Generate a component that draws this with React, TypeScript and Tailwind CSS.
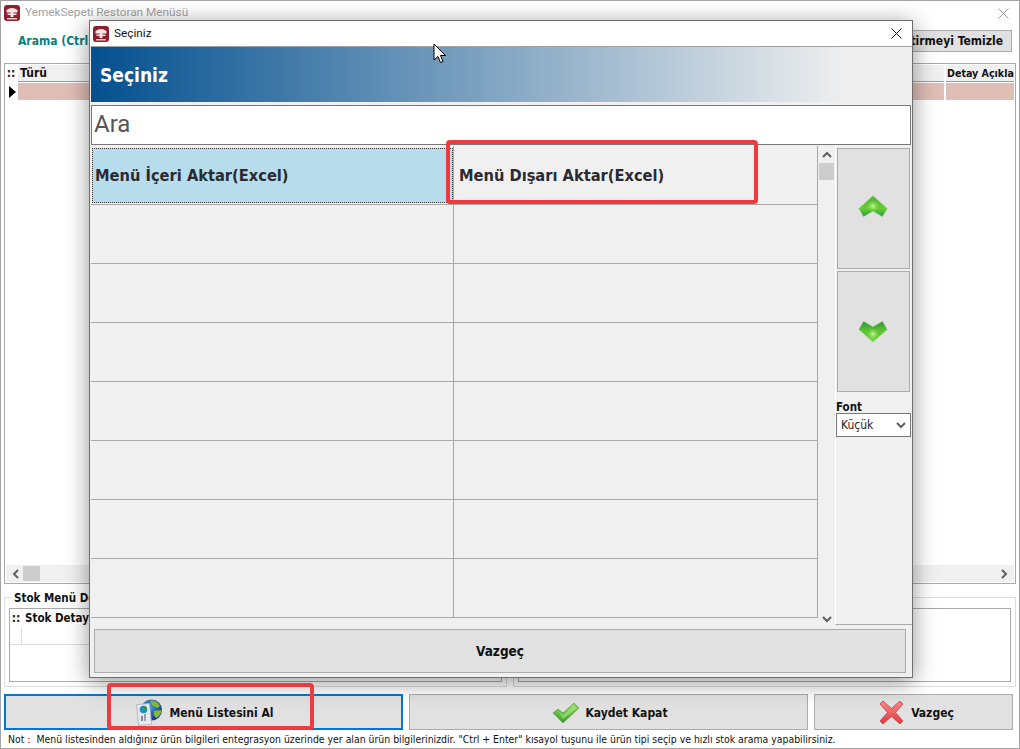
import React from "react";

const UI = '"DejaVu Sans Condensed", "DejaVu Sans", sans-serif';

const AppIcon = () => (
  <svg width="16" height="16" viewBox="0 0 16 16" className="shrink-0">
    <rect x="0" y="0" width="16" height="16" rx="3" fill="#8f1f2d" />
    <path d="M2.5 5 Q8 1 13.5 5 V7.5 H9.5 V8.5 H12.5 V10 H9.5 V12 H6.5 V10 H3.5 V8.5 H6.5 V7.5 H2.5 Z" fill="#f4e4e4" />
    <rect x="3" y="13" width="10" height="1.5" fill="#e9c9c9" />
  </svg>
);

const ArrowUp = () => (
  <svg width="30" height="23" viewBox="0 0 30 23">
    <defs>
      <linearGradient id="gu" x1="0" y1="0" x2="0" y2="1">
        <stop offset="0" stopColor="#4fb030" />
        <stop offset="0.6" stopColor="#66cc36" />
        <stop offset="1" stopColor="#2d9a42" />
      </linearGradient>
      <radialGradient id="gub" cx="0.5" cy="0.5" r="0.5">
        <stop offset="0" stopColor="#c8f590" />
        <stop offset="1" stopColor="#7ad848" stopOpacity="0" />
      </radialGradient>
    </defs>
    <path d="M15 0.5 L29.5 13.5 L24.5 22 L15 16.5 L5.5 22 L0.5 13.5 Z" fill="url(#gu)" stroke="#d7e6d5" strokeWidth="0.6" strokeLinejoin="round" />
    <ellipse cx="15" cy="11" rx="7" ry="6" fill="url(#gub)" />
  </svg>
);

const ArrowDown = () => (
  <svg width="30" height="23" viewBox="0 0 30 23">
    <defs>
      <linearGradient id="gd" x1="0" y1="0" x2="0" y2="1">
        <stop offset="0" stopColor="#2f8f3a" />
        <stop offset="0.45" stopColor="#5cc232" />
        <stop offset="1" stopColor="#7fd844" />
      </linearGradient>
      <radialGradient id="gdb" cx="0.5" cy="0.5" r="0.5">
        <stop offset="0" stopColor="#d2f79a" />
        <stop offset="1" stopColor="#7ad848" stopOpacity="0" />
      </radialGradient>
    </defs>
    <path d="M15 22.5 L29.5 9.5 L24.5 1 L15 6.5 L5.5 1 L0.5 9.5 Z" fill="url(#gd)" stroke="#d7e6d5" strokeWidth="0.6" strokeLinejoin="round" />
    <ellipse cx="15" cy="14" rx="6" ry="6" fill="url(#gdb)" />
  </svg>
);

const Check = () => (
  <svg width="28" height="22" viewBox="0 0 28 22">
    <defs>
      <linearGradient id="gc" x1="0" y1="0" x2="0" y2="1">
        <stop offset="0" stopColor="#8fdd5a" />
        <stop offset="1" stopColor="#3a9c2c" />
      </linearGradient>
    </defs>
    <path d="M1 11 L6 7 L11 11 L22 1 L27 6 L11 21 Z" fill="url(#gc)" stroke="#5aa24a" strokeWidth="0.7" />
    <path d="M6 9 L11 13 L22 3 L25 6 L11 17 Z" fill="#b6ec86" opacity="0.55" />
  </svg>
);

const Cross = () => (
  <svg width="25" height="25" viewBox="0 0 25 25">
    <defs>
      <linearGradient id="gx" x1="0" y1="0" x2="0" y2="1">
        <stop offset="0" stopColor="#f98a8a" />
        <stop offset="1" stopColor="#e33a3a" />
      </linearGradient>
    </defs>
    <path
      d="M4 1 L12.5 8.5 L21 1 L24 4 L16.5 12.5 L24 21 L21 24 L12.5 16.5 L4 24 L1 21 L8.5 12.5 L1 4 Z"
      fill="url(#gx)"
      stroke="#c83c3c"
      strokeWidth="0.8"
      strokeLinejoin="round"
    />
  </svg>
);

const GlobeDoc = () => (
  <svg width="28" height="28" viewBox="0 0 28 28">
    <defs>
      <radialGradient id="gg" cx="0.4" cy="0.35" r="0.7">
        <stop offset="0" stopColor="#3fa0dc" />
        <stop offset="1" stopColor="#14337e" />
      </radialGradient>
    </defs>
    <circle cx="15.5" cy="11" r="10.5" fill="url(#gg)" />
    <path d="M14 1.5 Q21 1 24 7 L21 9 L16 6 Z M18 12 L25.5 11 Q25 17 20 19 L18 16 Z" fill="#86b83a" />
    <rect x="1.5" y="5" width="13" height="21" fill="#e6eaf0" stroke="#aeb4bc" strokeWidth="0.8" transform="rotate(-6 8 15)" />
    <circle cx="7.5" cy="10.5" r="3.8" fill="#1f8dc8" />
    <path d="M7.5 7 A3.6 3.6 0 0 1 11 10.5 H7.5 Z" fill="#3a9a3a" />
    <rect x="5" y="17" width="2" height="5" fill="#7b8794" />
    <rect x="8" y="15" width="2" height="7" fill="#95a0ac" />
  </svg>
);

const Chev = ({ dir, className = "" }: { dir: "up" | "down" | "left" | "right"; className?: string }) => {
  const d = {
    up: "M1 6 L5 2 L9 6",
    down: "M1 2 L5 6 L9 2",
    left: "M6 1 L2 5 L6 9",
    right: "M2 1 L6 5 L2 9",
  }[dir];
  const horizontal = dir === "up" || dir === "down";
  return (
    <svg width={horizontal ? 10 : 8} height={horizontal ? 8 : 10} viewBox={horizontal ? "0 0 10 8" : "0 0 8 10"} className={className}>
      <path d={d} fill="none" stroke="#606060" strokeWidth="2" />
    </svg>
  );
};

const CloseX = ({ color, size }: { color: string; size: number }) => (
  <svg width={size} height={size} viewBox="0 0 11 11">
    <path d="M0.5 0.5 L10.5 10.5 M10.5 0.5 L0.5 10.5" stroke={color} strokeWidth="1" />
  </svg>
);

const Dots = () => <span className="text-[12px] font-bold leading-none text-[#222]">::</span>;

const rows = Array.from({ length: 8 });

export default function App() {
  return (
    <div
      className="relative flex h-[749px] w-[1020px] flex-col overflow-hidden border border-[#a3a3a3] bg-white text-[#111]"
      style={{ fontFamily: UI }}
    >
      {/* Main window */}
      <div className="absolute left-[-1px] top-[24px] h-[70px] w-px bg-[#b06a6a]" />
      <div className="flex h-[24px] shrink-0 items-center pl-[3px] pr-[10px]">
        <AppIcon />
        <span className="ml-[5px] text-[11.8px] text-[#a2a2a2]" style={{ fontFamily: "Roboto, sans-serif" }}>
          YemekSepeti Restoran Menüsü
        </span>
        <span className="ml-auto flex">
          <CloseX color="#9a9a9a" size={11} />
        </span>
      </div>
      <div className="flex h-[32px] shrink-0 items-center pl-[17px] pr-[7px]">
        <span className="text-[12px] font-bold text-[#0a8080]">Arama (Ctrl+F)</span>
        <button className="ml-auto flex h-[22px] w-[320px] items-center justify-end border border-[#ababab] bg-[#e1e1e1] pr-[8px] text-[12px] font-bold">
          Filtre Eşleştirmeyi Temizle
        </button>
      </div>
      <div className="mx-[3px] mt-[6px] flex h-[521px] shrink-0 flex-col border border-[#a9a9a9] p-px">
        <div className="grid h-[16px] grid-cols-[10px_926px_1fr] gap-[2px] text-[12px] font-bold leading-[16px]">
          <span className="text-center"><Dots /></span>
          <span className="border-b border-[#9c9c9c] bg-[#f0f0f0] pl-[2px]">Türü</span>
          <span className="overflow-hidden whitespace-nowrap border-b border-[#9c9c9c] bg-[#f0f0f0] pl-px text-[10.6px]">Detay Açıkla</span>
        </div>
        <div className="mt-[2px] grid h-[17px] grid-cols-[10px_926px_1fr] gap-[2px]">
          <span className="flex items-center justify-center pl-[2px]">
            <svg width="7" height="12" viewBox="0 0 7 12">
              <path d="M0 0 L7 6 L0 12 Z" fill="#000" />
            </svg>
          </span>
          <span className="bg-[#e0bdb5]" />
          <span className="bg-[#e0bdb5]" />
        </div>
        <div className="flex-1" />
        <div className="flex h-[17px] items-center bg-[#f0f0f0] pl-[6px] pr-[6px]">
          <Chev dir="left" />
          <span className="ml-[3px] h-[15px] w-[17px] bg-[#cdcdcd]" />
          <Chev dir="right" className="ml-auto" />
        </div>
      </div>
      <div className="mx-[3px] mt-[13px] grid h-[90px] shrink-0 grid-cols-2 gap-[6px]">
        <div className="relative border border-[#dcdcdc] p-[4px] pt-[10px]">
          <span className="absolute left-[7px] top-[-8px] bg-white px-[2px] text-[11.5px] font-bold">Stok Menü Detay</span>
          <div className="h-full border border-[#a9a9a9]">
            <div className="flex h-[18px] text-[11.5px] font-bold leading-[18px]">
              <span className="w-[12px] text-center"><Dots /></span>
              <span className="ml-px pl-[2px]">Stok Detay</span>
            </div>
            <div className="h-[18px] w-full border-b border-[#dcdcdc]">
              <div className="h-full w-[12px] border-r border-[#dcdcdc]" />
            </div>
          </div>
        </div>
        <div className="border border-[#dcdcdc] p-[4px] pt-[10px]">
          <div className="h-full border border-[#a9a9a9]" />
        </div>
      </div>
      <div className="mt-[7px] flex h-[36px] shrink-0 gap-[6px] pl-[3px]">
        <button className="flex h-full w-[399px] items-center justify-center gap-[5px] border-2 border-[#0078d7] bg-[#e1e1e1] pl-[3px] pt-px text-[12px] font-bold">
          <GlobeDoc />
          Menü Listesini Al
        </button>
        <button className="flex h-full w-[399px] items-center justify-center gap-[5px] border border-[#adadad] bg-[#e1e1e1] pl-[3px] pt-px text-[12px] font-bold">
          <Check />
          Kaydet Kapat
        </button>
        <button className="flex h-full w-[199px] items-center justify-center gap-[7px] border border-[#adadad] bg-[#e1e1e1] pl-[6px] pt-px text-[12px] font-bold">
          <Cross />
          Vazgeç
        </button>
      </div>
      <div className="whitespace-pre pl-[7px] pt-px text-[10.4px] leading-[17px]">
        Not :  Menü listesinden aldığınız ürün bilgileri entegrasyon üzerinde yer alan ürün bilgilerinizdir. "Ctrl + Enter" kısayol tuşunu ile ürün tipi seçip ve hızlı stok arama yapabilirsiniz.
      </div>

      {/* Dialog window */}
      <div className="absolute left-[88px] top-[19px] flex h-[658px] w-[824px] flex-col border border-[#6f6f6f] bg-[#f0f0f0] shadow-[0_4px_22px_rgba(0,0,0,0.42)]">
        <div className="flex h-[25px] shrink-0 items-center bg-white pl-[3px] pr-[10px]">
          <AppIcon />
          <span className="ml-[5px] text-[11.8px] text-[#111]" style={{ fontFamily: "Roboto, sans-serif" }}>Seçiniz</span>
          <span className="ml-auto flex"><CloseX color="#111" size={11} /></span>
        </div>
        <div className="ml-px flex h-[56px] shrink-0 items-center border-t border-[#a0a0a0] bg-[linear-gradient(90deg,#04508f_0%,#efefef_92%)] pl-[9px] pt-[2px] text-[19px] font-bold text-white">
          Seçiniz
        </div>
        <div className="ml-px mr-px mt-[3px] flex h-[40px] shrink-0 items-center border border-[#777] bg-white pb-[3px] pl-[2px] text-[24px] text-[#555]" style={{ fontFamily: "Roboto, sans-serif" }}>
          Ara
        </div>
        <div className="mt-px flex h-[479px] shrink-0">
          <div className="ml-px w-[727px] shrink-0 overflow-hidden">
            <div className="grid grid-cols-[362px_365px]">
              {rows.map((_, i) => (
                <React.Fragment key={i}>
                  {i === 0 ? (
                    <div className="h-[59px] border-b border-[#a8a8a8] pb-px pl-px pt-[2px]">
                      <div className="flex h-full items-center border border-dotted border-[#333] bg-[#b7dcec] pl-[2px] pt-[2px] text-[16.3px] font-bold text-[#2a2a33]">
                        Menü İçeri Aktar(Excel)
                      </div>
                    </div>
                  ) : (
                    <div className="h-[59px] border-b border-[#a8a8a8]" />
                  )}
                  <div className="flex h-[59px] items-center border-x border-b border-[#a8a8a8] pl-[5px] pt-[2px] text-[16.3px] font-bold text-[#2a2a33]">
                    {i === 0 ? "Menü Dışarı Aktar(Excel)" : null}
                  </div>
                </React.Fragment>
              ))}
            </div>
          </div>
          <div className="flex w-[17px] shrink-0 flex-col items-center pt-[5px]">
            <Chev dir="up" />
            <span className="mt-[4px] h-[17px] w-[15px] bg-[#cdcdcd]" />
            <Chev dir="down" className="mb-[2px] mt-auto" />
          </div>
          <div className="flex flex-1 flex-col border-b border-l border-b-[#a8a8a8] border-l-white pr-px">
            <div className="mx-px mt-[2px] flex h-[121px] items-center justify-center border border-[#adadad] bg-[#e1e1e1] pb-[4px] pr-px">
              <ArrowUp />
            </div>
            <div className="mx-px mt-[2px] flex h-[121px] items-center justify-center border border-[#adadad] bg-[#e1e1e1] pr-px">
              <ArrowDown />
            </div>
            <span className="mt-[10px] text-[11.5px] font-bold leading-[11px]">Font</span>
            <div className="flex h-[24px] items-center justify-between border border-[#777] bg-white pl-[4px] pr-[4px] text-[12px] text-[#222]">
              Küçük
              <Chev dir="down" />
            </div>
          </div>
        </div>
        <button className="ml-[4px] mr-[6px] mt-[4px] h-[44px] shrink-0 border border-[#adadad] bg-[#e1e1e1] text-[13.5px] font-bold">
          Vazgeç
        </button>
      </div>

      {/* Red annotations */}
      <div className="absolute left-[445px] top-[139px] h-[64px] w-[312px] rounded-[4px] border-[4px] border-[#ef3b40]" />
      <div className="absolute left-[106px] top-[682px] h-[47px] w-[207px] rounded-[4px] border-[4px] border-[#ef3b40]" />

      {/* Mouse cursor */}
      <svg className="absolute left-[432px] top-[42px]" width="14" height="22" viewBox="0 0 14 22">
        <path d="M1 1 V17 L5 13.5 L7.5 19.5 L10 18.5 L7.5 12.5 L12.5 12.5 Z" fill="#fff" stroke="#000" strokeWidth="1" />
      </svg>
    </div>
  );
}
